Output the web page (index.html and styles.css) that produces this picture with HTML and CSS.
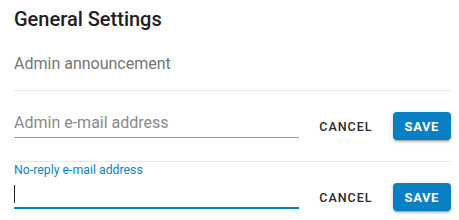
FILE: index.html
```html
<!DOCTYPE html>
<html lang="en">
<head>
  <meta charset="UTF-8">
  <title>General Settings</title>
  <link rel="stylesheet" href="styles.css">
</head>
<body>
  <div class="settings">
    <h2 class="title">General Settings</h2>
    <div class="row row-static">Admin announcement</div>
    <div class="row">
      <div class="field">
        <label class="field-label" for="admin-email"></label>
        <input class="field-input" id="admin-email" type="text" placeholder="Admin e-mail address">
      </div>
      <div class="actions">
        <button type="button" class="btn-flat">Cancel</button>
        <button type="button" class="btn-raised">Save</button>
      </div>
    </div>
    <div class="row">
      <div class="field focused">
        <label class="field-label" for="noreply-email">No-reply e-mail address</label>
        <div class="input-wrap">
          <input class="field-input" id="noreply-email" type="text">
          <span class="caret"></span>
        </div>
      </div>
      <div class="actions">
        <button type="button" class="btn-flat">Cancel</button>
        <button type="button" class="btn-raised">Save</button>
      </div>
    </div>
  </div>
</body>
</html>
```

FILE: styles.css
```css
body { margin: 0; background: #fff; font-family: Roboto, "Liberation Sans", sans-serif; color: #212121; }
.settings { padding: 7px 8px 0 14px; }
.title { margin: 0; font-size: 20px; line-height: 24px; font-weight: 500; color: #212121; }
.row { display: flex; height: 70px; border-bottom: 1px solid #e8e8e8; }
.row-static { display: block; height: auto; padding: 21px 0 14px; font-size: 16px; line-height: 24px; color: #757575; }
.field { width: 285px; align-self: flex-start; }
.field-label { display: block; height: 16px; font-size: 12.3px; line-height: 16px; color: #0b84c6; }
.input-wrap { position: relative; }
.field-input { display: block; box-sizing: border-box; width: 100%; height: 31px; margin: 0; padding: 5px 0; border: none; border-bottom: 1px solid #9e9e9e; outline: none; background: transparent; font-family: inherit; font-size: 16px; line-height: 20px; color: #212121; }
.field-input::placeholder { color: #8a8a8a; opacity: 1; }
.focused .field-input { border-bottom: 2px solid #0a80c4; }
.caret { position: absolute; left: 0; top: 7px; width: 1px; height: 18px; background: #212121; }
.actions { display: flex; align-items: center; margin-left: auto; }
.btn-flat { margin-right: 10px; padding: 0 10px; height: 28px; border: none; background: transparent; font-family: inherit; font-size: 12.5px; font-weight: 500; letter-spacing: 1px; text-transform: uppercase; color: #2a2a2a; cursor: pointer; }
.btn-raised { height: 28px; padding: 0 12px; border: none; border-radius: 4px; background: #0a80c4; color: #fff; font-family: inherit; font-size: 13px; font-weight: 700; letter-spacing: 0.6px; text-transform: uppercase; cursor: pointer; box-shadow: 0 2px 2px rgba(0,0,0,.14), 0 3px 1px -2px rgba(0,0,0,.2), 0 1px 5px rgba(0,0,0,.12); }
```
